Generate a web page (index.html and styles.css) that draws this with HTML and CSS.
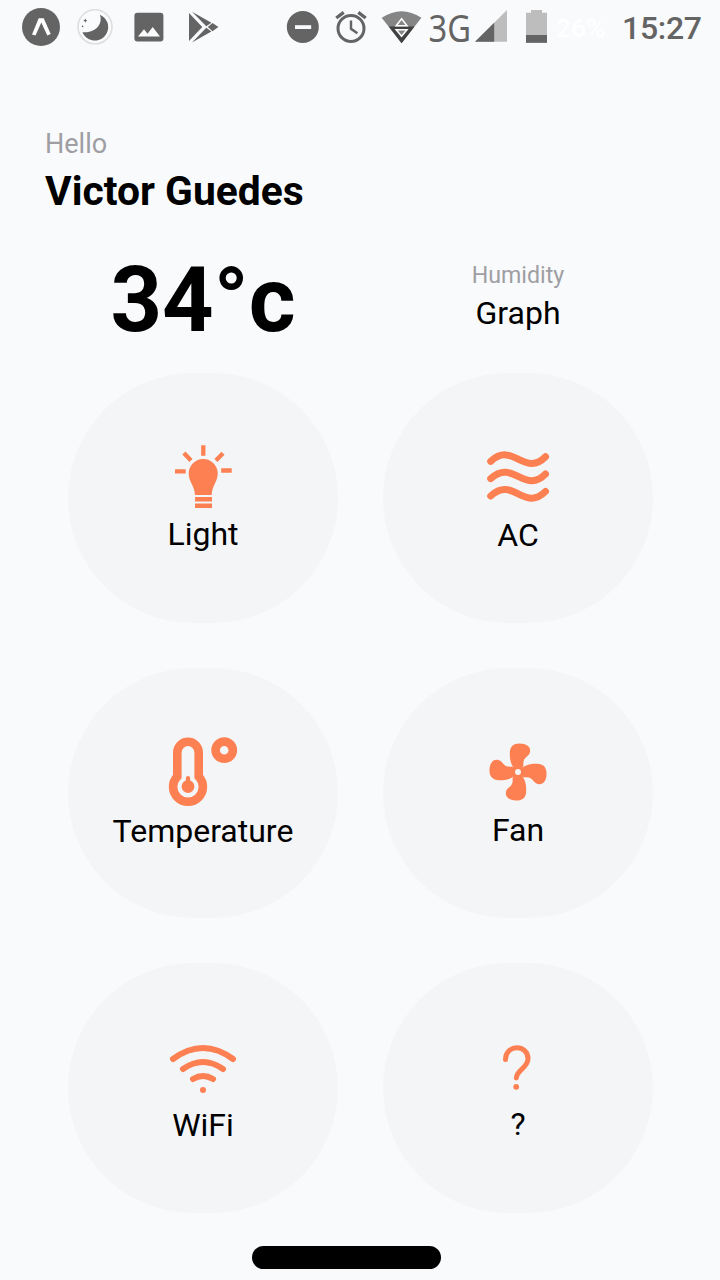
FILE: index.html
```html
<!DOCTYPE html>
<html lang="en">
<head>
<meta charset="utf-8">
<title>Smart Home</title>
<link rel="stylesheet" href="styles.css">
</head>
<body>
<div class="screen">
  <div class="status">
    <svg class="status-left" width="200" height="54" viewBox="20 0 200 54">
      <circle cx="41" cy="27" r="19" fill="#646464"/>
      <path d="M32 34.5L38.7 18.3H43.7L50.7 34L47.3 35.4L41.3 22.5L35.5 35.4Z" fill="#fff"/>
      <circle cx="95" cy="26.8" r="17" fill="#fafbfc" stroke="#dedede" stroke-width="1.6"/>
      <path d="M100 14.8A13.4 13.4 0 1 1 82.4 32.2C93 33.600 103.500 26 100 14.8Z" fill="#646464"/>
      <path d="M85.3 18.5L86 20L87.3 20.5L86 21.2L85.3 22.8L84.6 21.2L83.2 20.5L84.6 20Z" fill="#646464"/>
      <circle cx="82.6" cy="26.4" r=".8" fill="#646464"/>
      <rect x="134.4" y="12.7" width="29" height="28.8" rx="3" fill="#646464"/>
      <path d="M138 36.5L144 29.3L147.5 33.7L152.7 27L160 36.5Z" fill="#fafbfc"/>
      <path d="M189 13L202.3 27L189 41ZM192 11.8L211.4 22.7L206.3 26.3ZM192 42.4L211.4 31.4L206.3 27.8ZM212.5 22.9L218.4 27L212.5 31.2L207.8 27Z" fill="#646464"/>
    </svg>
    <svg class="status-right" width="264" height="54" viewBox="284 0 264 54">
      <circle cx="302.8" cy="27" r="16" fill="#646464"/>
      <rect x="295" y="25.2" width="16.2" height="3.8" fill="#f9fafc"/>
      <g fill="none" stroke="#646464">
        <circle cx="351" cy="28.4" r="13" stroke-width="3"/>
        <path d="M351 20.5V28.8L357.4 33.3" stroke-width="2.4"/>
        <path d="M336.3 18L343.7 12.4M358.3 12.4L365.7 18" stroke-width="3.4"/>
      </g>
      <path d="M401.6 43.3L381.7 17.8Q401.6 4.5 421.4 17.8Z" fill="#858585"/>
      <path d="M388.7 26.6H414.5L401.6 43.3Z" fill="#414141"/>
      <path d="M401.6 18.8L407 25.7H396.2ZM401.6 36.3L407 29.8H396.2Z" fill="#858585" stroke="#fff" stroke-width="1.5"/>
      <text class="network" x="428.500" y="42.300" textLength="42.500" lengthAdjust="spacingAndGlyphs">3G</text>
      <path d="M507 10V41.8H475Z" fill="#bdbdbd"/>
      <path d="M494.2 22.7V41.8H475Z" fill="#646464"/>
      <path d="M531 10H542V12.8H547V42.8H526V12.8H531Z" fill="#bdbdbd"/>
      <path d="M526 35H547V42.8H526Z" fill="#646464"/>
    </svg>
    <span class="battery">26%</span>
    <span class="clock">15:27</span>
  </div>

  <header class="greeting">
    <div class="hello">Hello</div>
    <h1 class="name">Victor Guedes</h1>
  </header>

  <section class="summary">
    <div class="degrees">34°c</div>
    <div class="humidity">
      <div class="humidity-title">Humidity</div>
      <div class="humidity-value">Graph</div>
    </div>
  </section>

  <main class="cards">
    <div class="card">
      <svg class="icon" viewBox="153 433 100 80" fill="#fc8052">
        <path d="M195 495C194.500 485 188.700 482 188.700 473.400A14.500 14.500 0 0 1 217.700 473.400C217.700 482 212 485 211.700 495Z"/>
        <path d="M195 497h17v4.600h-17zM195 503.400h17v4.500h-17z"/>
        <path d="M203.300 445.300V455.800M183.900 453L191 460.500M223 453.200L215.900 460.500M175 471.300H185.700M221.200 470.500H231.700" stroke="#fc8052" stroke-width="4.300"/>
      </svg>
      <div class="label label-high">Light</div>
    </div>
    <div class="card">
      <svg class="icon" viewBox="468 433 100 80" fill="none" stroke="#fc8052" stroke-width="7" stroke-linecap="round">
        <path d="M490.700 461.300C508 445.500 518 463.800 532 463.500Q539 463.300 545.500 456.700"/>
        <path d="M490.700 478.600C508 462.800 518 481.100 532 480.800Q539 480.600 545.500 474"/>
        <path d="M490.700 496C508 480.200 518 498.500 532 498.200Q539 498 545.500 491.400"/>
      </svg>
      <div class="label">AC</div>
    </div>
    <div class="card">
      <svg class="icon" viewBox="153 728 100 80" fill="none" stroke="#fc8052">
        <path d="M177.300 776.500V752.500A10.700 10.700 0 0 1 198.700 752.500V776.500A14.900 14.900 0 1 1 177.300 776.500Z" stroke-width="8.600"/>
        <circle cx="188" cy="786.500" r="6.400" fill="#fc8052" stroke="none"/>
        <path d="M188 778V784" stroke-width="4.200" stroke-linecap="round"/>
        <circle cx="224.200" cy="750.200" r="8.600" stroke-width="8.600"/>
      </svg>
      <div class="label label-low">Temperature</div>
    </div>
    <div class="card">
      <svg class="icon" viewBox="468 728 100 80">
        <g transform="translate(518 772) scale(.328)" fill="#fc8052">
          <path id="blade" d="M-16 -17C-24 -30 -25 -43 -25 -57C-25 -78 -14 -87 5 -87C26 -87 38 -77 37 -64C36 -43 12 -49 17 -18L0 0Z"/>
          <use href="#blade" transform="rotate(90)"/>
          <use href="#blade" transform="rotate(180)"/>
          <use href="#blade" transform="rotate(270)"/>
          <circle r="20"/>
          <circle r="9" fill="#f4f5f7"/>
        </g>
      </svg>
      <div class="label">Fan</div>
    </div>
    <div class="card">
      <svg class="icon" viewBox="153 1023 100 80" fill="none" stroke="#fc8052" stroke-width="6" stroke-linecap="round">
        <path d="M173 1059Q203 1037 233 1059M183 1069Q203 1055 223 1069M193 1079Q203 1073 213 1079"/>
        <circle cx="203" cy="1090" r="3" fill="#fc8052" stroke="none"/>
      </svg>
      <div class="label">WiFi</div>
    </div>
    <div class="card">
      <svg class="icon" viewBox="468 1023 100 80" fill="none" stroke="#fc8052" stroke-width="5" stroke-linecap="round">
        <path d="M505.500 1059.500C505.500 1044 528.300 1044 528 1059C527.700 1068 516.500 1070 516.300 1078"/>
        <circle cx="516.200" cy="1086.800" r="2.900" fill="#fc8052" stroke="none"/>
      </svg>
      <div class="label label-high">?</div>
    </div>
  </main>

  <div class="home-bar"></div>
</div>
</body>
</html>
```
FILE: styles.css
```css
* { box-sizing: border-box; margin: 0; }
body {
  background: #f9fafc;
  color: #000;
  font-family: Roboto, "Liberation Sans", sans-serif;
}
svg { display: block; flex: none; }
.screen {
  width: 720px;
  height: 1280px;
  overflow: hidden;
  display: flex;
  flex-direction: column;
}
.status {
  height: 54px;
  display: flex;
  align-items: center;
  padding-left: 20px;
}
.status-right { margin-left: 64px; overflow: visible; }
.network {
  font: 39px "Noto Sans", sans-serif;
  fill: #646464;
}
.battery {
  width: 66px;
  padding: 0 0 0 8px;
  font-size: 26.5px;
  font-weight: 500;
  color: #fff;
}
.clock {
  padding: 2px 0 0 8px;
  font-size: 32px;
  font-weight: 500;
  letter-spacing: -.3px;
  color: #646464;
}
.greeting { padding: 74px 0 0 45px; }
.hello { font-size: 27px; line-height: 32px; color: #9e9ea3; }
.name { margin-top: 7px; font-size: 40.8px; line-height: 48px; font-weight: 700; }
.summary {
  display: grid;
  grid-template-columns: 270px 270px;
  column-gap: 45px;
  align-items: center;
  height: 120px;
  margin: 23px 0 15px 68px;
  text-align: center;
}
.degrees { padding-top: 6px; font-size: 90px; line-height: 106px; font-weight: 700; }
.humidity-title { font-size: 23.2px; line-height: 28px; color: #9e9ea3; }
.humidity-value { margin: 5px 0 3px; font-size: 32px; line-height: 38px; }
.cards {
  display: grid;
  grid-template-columns: 270px 270px;
  gap: 45px;
  margin-left: 68px;
}
.card {
  height: 250px;
  padding-top: 60px;
  border-radius: 125px;
  background: #f4f5f7;
  display: flex;
  flex-direction: column;
  align-items: center;
}
.icon { width: 100px; height: 80px; }
.label { margin-top: 3px; font-size: 32px; line-height: 38px; }
.label-high { margin-top: 2px; }
.label-low { margin-top: 4px; }
.home-bar {
  width: 189px;
  height: 23px;
  margin: 33px 0 0 252px;
  border-radius: 11.5px;
  background: #000;
}
```
